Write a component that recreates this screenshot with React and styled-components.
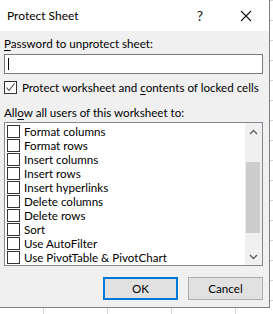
import React from "react";
import styled, { createGlobalStyle } from "styled-components";

const items = [
  "Format columns",
  "Format rows",
  "Insert columns",
  "Insert rows",
  "Insert hyperlinks",
  "Delete columns",
  "Delete rows",
  "Sort",
  "Use AutoFilter",
  "Use PivotTable & PivotChart",
];

const GlobalStyle = createGlobalStyle`
  html, body {
    margin: 0;
    padding: 0;
    background-color: #ffffff;
    background-image:
      linear-gradient(#d4d4d4 1px, transparent 1px),
      linear-gradient(90deg, #d4d4d4 1px, transparent 1px);
    background-size: 64px 20px;
    background-position: 43px 0;
    font-family: "Lato", "Open Sans", sans-serif;
  }
`;

const App = () => {
  return (
    <>
      <GlobalStyle />
      <StDialog>
        <StTitleBar>
          <StTitle>Protect Sheet</StTitle>
          <StTitleButton>?</StTitleButton>
          <StTitleButton>
            <svg width="12" height="12" viewBox="0 0 12 12">
              <path d="M1 1 L11 11 M11 1 L1 11" stroke="#111" strokeWidth="1.1" />
            </svg>
          </StTitleButton>
        </StTitleBar>

        <StBody>
          <StLabel>
            <u>P</u>assword to unprotect sheet:
          </StLabel>
          <StInput>
            <StCaret />
          </StInput>

          <StCheckRow>
            <StBox>
              <svg width="11" height="11" viewBox="0 0 11 11">
                <polyline points="1.5,5.5 4,8.5 9.5,1.5" fill="none" stroke="#444" strokeWidth="1.1" />
              </svg>
            </StBox>
            <span>
              Protect worksheet and <u>c</u>ontents of locked cells
            </span>
          </StCheckRow>

          <StLabel $top={10}>
            All<u>o</u>w all users of this worksheet to:
          </StLabel>

          <StList>
            <StItems>
              {items.map((item) => (
                <StItem key={item}>
                  <StBox $small />
                  <span>{item}</span>
                </StItem>
              ))}
            </StItems>
            <StScrollbar>
              <StArrow>
                <svg width="9" height="6" viewBox="0 0 9 6">
                  <polyline points="1,5 4.5,1.5 8,5" fill="none" stroke="#606060" strokeWidth="1.4" />
                </svg>
              </StArrow>
              <StTrack>
                <StThumb />
              </StTrack>
              <StArrow>
                <svg width="9" height="6" viewBox="0 0 9 6">
                  <polyline points="1,1 4.5,4.5 8,1" fill="none" stroke="#606060" strokeWidth="1.4" />
                </svg>
              </StArrow>
            </StScrollbar>
          </StList>

          <StButtons>
            <StButton $primary>OK</StButton>
            <StButton>Cancel</StButton>
          </StButtons>
        </StBody>
      </StDialog>
    </>
  );
};

export default App;

const StDialog = styled.div`
  width: 269px;
  height: 307px;
  background: #f0f0f0;
  border-right: 1px solid #7f7f7f;
  border-bottom: 1px solid #7f7f7f;
  display: flex;
  flex-direction: column;
  color: #000;
  font-size: 11.6px;
`;

const StTitleBar = styled.div`
  height: 31px;
  background: #fff;
  display: flex;
  align-items: center;
  padding-left: 7px;
`;

const StTitle = styled.div`
  flex: 1;
  font-size: 12px;
  padding-bottom: 1px;
`;

const StTitleButton = styled.div`
  width: 46px;
  height: 31px;
  display: flex;
  align-items: center;
  justify-content: center;
  font-size: 14px;
  color: #111;
`;

const StBody = styled.div`
  flex: 1;
  display: flex;
  flex-direction: column;
  padding: 5px 6px 0 4px;
`;

const StLabel = styled.div`
  height: 16px;
  line-height: 16px;
  white-space: nowrap;
  margin-top: ${(p) => p.$top || 0}px;
  u {
    text-underline-offset: 2px;
  }
`;

const StInput = styled.div`
  margin-top: 2px;
  height: 18px;
  background: #fff;
  border: 1px solid #7a7a7a;
  display: flex;
  align-items: center;
  padding-left: 3px;
`;

const StCaret = styled.div`
  width: 1px;
  height: 12px;
  background: #000;
`;

const StCheckRow = styled.div`
  margin-top: 5px;
  height: 16px;
  display: flex;
  align-items: center;
  gap: 5px;
  white-space: nowrap;
  u {
    text-underline-offset: 2px;
  }
`;

const StBox = styled.div`
  width: 11px;
  height: 11px;
  border: 1px solid #333;
  background: #fff;
  display: flex;
  align-items: center;
  justify-content: center;
  flex-shrink: 0;
  margin-left: ${(p) => (p.$small ? "2px" : "0")};
`;

const StList = styled.div`
  margin-top: 1px;
  height: 142px;
  border: 1px solid #828790;
  background: #fff;
  display: flex;
`;

const StItems = styled.div`
  flex: 1;
  padding-top: 1px;
  overflow: hidden;
`;

const StItem = styled.div`
  height: 14px;
  display: flex;
  align-items: center;
  gap: 4px;
  white-space: nowrap;
`;

const StScrollbar = styled.div`
  width: 17px;
  background: #f0f0f0;
  display: flex;
  flex-direction: column;
`;

const StArrow = styled.div`
  height: 17px;
  display: flex;
  align-items: center;
  justify-content: center;
`;

const StTrack = styled.div`
  flex: 1;
  padding-top: 22px;
`;

const StThumb = styled.div`
  height: 71px;
  margin: 0 2px 0 1px;
  background: #cdcdcd;
`;

const StButtons = styled.div`
  margin-top: 11px;
  display: flex;
  justify-content: flex-end;
  gap: 10px;
`;

const StButton = styled.div`
  width: ${(p) => (p.$primary ? "71px" : "73px")};
  height: ${(p) => (p.$primary ? "19px" : "21px")};
  border: ${(p) => (p.$primary ? "2px solid #0078d7" : "1px solid #adadad")};
  background: #e1e1e1;
  display: flex;
  align-items: center;
  justify-content: center;
`;
